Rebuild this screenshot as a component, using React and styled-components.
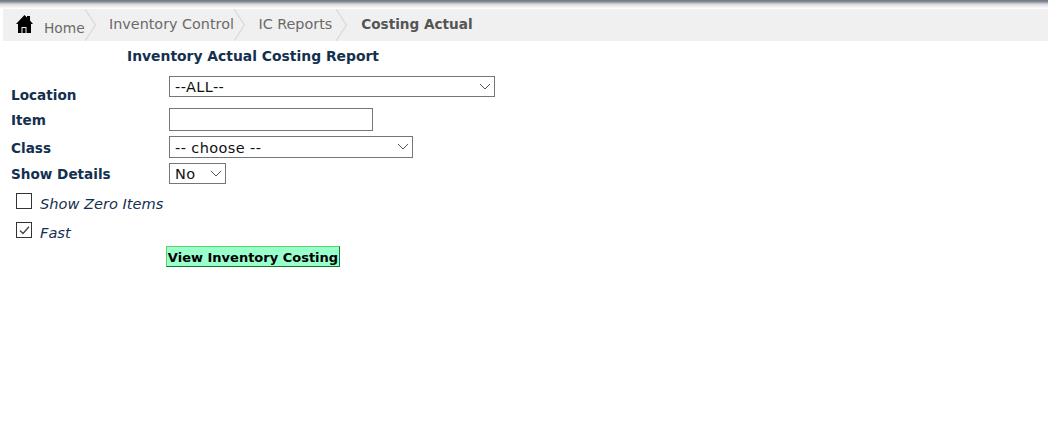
import React from "react";
import styled, { createGlobalStyle } from "styled-components";

const crumbs = [
  { name: "Inventory Control", after: 0.5 },
  { name: "IC Reports", after: 4 }
];

export default function App() {
  return (
    <Page>
      <GlobalStyle />
      <TopEdge />
      <Breadcrumb>
        <HomeCrumb>
          <HomeIcon />
          <HomeText>Home</HomeText>
          <Chevron />
        </HomeCrumb>
        {crumbs.map(c => (
          <Crumb key={c.name} $after={c.after}>
            {c.name}
            <Chevron />
          </Crumb>
        ))}
        <CurrentCrumb>Costing Actual</CurrentCrumb>
      </Breadcrumb>
      <Title>Inventory Actual Costing Report</Title>
      <Form>
        <LocationRow>
          <LocationLabel>Location</LocationLabel>
          <SelectBox width={326} height={21}>
            <Select defaultValue="all">
              <option value="all">--ALL--</option>
            </Select>
            <Arrow />
          </SelectBox>
        </LocationRow>
        <ItemRow>
          <Label>Item</Label>
          <TextInput type="text" />
        </ItemRow>
        <ClassRow>
          <ClassLabel>Class</ClassLabel>
          <SelectBox width={244} height={22}>
            <ClassSelect defaultValue="choose">
              <option value="choose">-- choose --</option>
            </ClassSelect>
            <Arrow />
          </SelectBox>
        </ClassRow>
        <DetailsRow>
          <Label>Show Details</Label>
          <SelectBox width={57} height={21}>
            <Select defaultValue="no">
              <option value="no">No</option>
            </Select>
            <Arrow />
          </SelectBox>
        </DetailsRow>
        <CheckRow>
          <CheckBox />
          <CheckLabel>Show Zero Items</CheckLabel>
        </CheckRow>
        <CheckRow>
          <CheckBox>
            <svg width="13" height="13" viewBox="0 0 13 13" fill="none">
              <path d="M2 6.5 L5 9.5 L11 2.8" stroke="#444" strokeWidth="1.3" />
            </svg>
          </CheckBox>
          <CheckLabel>Fast</CheckLabel>
        </CheckRow>
        <ViewButton type="button">View Inventory Costing</ViewButton>
      </Form>
    </Page>
  );
}

function Chevron() {
  return (
    <ChevronSvg width="12" height="32" viewBox="0 0 12 32" fill="none">
      <path d="M0 0 L10.5 16 L0 32" stroke="#dcdcdc" strokeWidth="1.4" />
    </ChevronSvg>
  );
}

function Arrow() {
  return (
    <ArrowSvg width="12" height="7" viewBox="0 0 12 7" fill="none">
      <path d="M1 1 L6 6 L11 1" stroke="#555" strokeWidth="1" />
    </ArrowSvg>
  );
}

function HomeIcon() {
  return (
    <HomeSvg width="17" height="18" viewBox="0 0 17 18">
      <path
        fill="#000"
        fillRule="evenodd"
        d="M8.5 0 L11 2.5 L11 1 L14 1 L14 5.5 L17 9 L15 9 L15 18 L2 18 L2 9 L0 9 Z M5.5 18 L5.5 12 L10.5 12 L10.5 18 L9.5 18 L9.5 13 L6.5 13 L6.5 18 Z"
      />
    </HomeSvg>
  );
}

const GlobalStyle = createGlobalStyle`
  html, body {
    margin: 0;
    padding: 0;
    background: #fff;
  }
`;

const Page = styled.div`
  width: 1048px;
  height: 430px;
  overflow: hidden;
  font-family: "DejaVu Sans", Verdana, sans-serif;
  color: #14304f;
`;

const TopEdge = styled.div`
  height: 9px;
  background: linear-gradient(#6d7480 0, #8d929a 2px, #d4d6d9 4px, #f4f4f4 7px, #fff 9px);
`;

const Breadcrumb = styled.div`
  display: flex;
  align-items: stretch;
  height: 32px;
  margin-left: 3px;
  background: #f0f0f0;
  font-size: 14.35px;
  color: #6a6a6a;
`;

const Crumb = styled.div`
  position: relative;
  display: flex;
  align-items: center;
  padding: 0 ${p => p.$after || 0}px 2px 24px;
  white-space: nowrap;
`;

const HomeCrumb = styled(Crumb)`
  padding: 0 0 0 13px;
  width: 82px;
  box-sizing: border-box;
  align-items: flex-start;
`;

const HomeText = styled.span`
  margin: 11px 0 0 11px;
  font-size: 13.8px;
`;

const CurrentCrumb = styled(Crumb)`
  padding-left: 25px;
  font-size: 13.6px;
  font-weight: bold;
  color: #555;
`;

const HomeSvg = styled.svg`
  margin-top: 6px;
  flex: none;
`;

const ChevronSvg = styled.svg`
  position: absolute;
  top: 0;
  right: -12px;
`;

const Title = styled.h1`
  margin: 6px 0 0 127px;
  height: 20px;
  font-size: 13.9px;
  line-height: 18px;
  font-weight: bold;
  color: #14304f;
`;

const Form = styled.form`
  margin: 9px 0 0 11px;
`;

const Row = styled.div`
  display: grid;
  grid-template-columns: 158px auto;
  justify-content: start;
  align-items: center;
`;

const LocationRow = styled(Row)`
  align-items: start;
  margin-bottom: 4px;
`;

const ItemRow = styled(Row)`
  margin-bottom: 5px;
`;

const ClassRow = styled(Row)`
  margin-bottom: 5px;
`;

const DetailsRow = styled(Row)`
  margin-bottom: 5px;
`;

const Label = styled.label`
  font-size: 13.6px;
  font-weight: bold;
  line-height: 18px;
  color: #14304f;
`;

const LocationLabel = styled(Label)`
  padding-top: 10px;
`;

const ClassLabel = styled(Label)`
  padding-top: 1px;
`;

const SelectBox = styled.div`
  position: relative;
  width: ${p => p.width}px;
  height: ${p => p.height}px;
`;

const Select = styled.select`
  appearance: none;
  display: block;
  width: 100%;
  height: 100%;
  box-sizing: border-box;
  padding: 0 0 0 5px;
  border: 1px solid #767676;
  border-radius: 0;
  background: #fff;
  font-family: "DejaVu Sans", sans-serif;
  font-size: 14.5px;
  letter-spacing: 0.4px;
  color: #111;
`;

const ClassSelect = styled(Select)`
  padding-top: 2px;
`;

const ArrowSvg = styled.svg`
  position: absolute;
  right: 4px;
  top: 7px;
  pointer-events: none;
`;

const TextInput = styled.input`
  display: block;
  width: 204px;
  height: 23px;
  box-sizing: border-box;
  padding: 0 4px;
  border: 1px solid #767676;
  background: #fff;
`;

const CheckRow = styled.div`
  display: flex;
  align-items: center;
  gap: 8px;
  height: 29px;
  margin-left: 5px;
`;

const CheckBox = styled.span`
  display: flex;
  align-items: center;
  justify-content: center;
  box-sizing: border-box;
  width: 16px;
  height: 16px;
  margin-top: -5px;
  border: 1px solid #333;
  background: #fff;
`;

const CheckLabel = styled.span`
  font-size: 14.6px;
  font-style: italic;
  color: #14304f;
`;

const ViewButton = styled.button`
  display: block;
  width: 174px;
  height: 21px;
  margin: -1px 0 0 155px;
  padding: 2px 0 0;
  box-sizing: border-box;
  border-style: solid;
  border-width: 1px;
  border-color: #5fd35f #0a7a2a #0a7a2a #5fd35f;
  background: #99ffcc;
  font-family: "DejaVu Sans", Verdana, sans-serif;
  font-size: 13px;
  font-weight: bold;
  color: #000;
  white-space: nowrap;
`;
